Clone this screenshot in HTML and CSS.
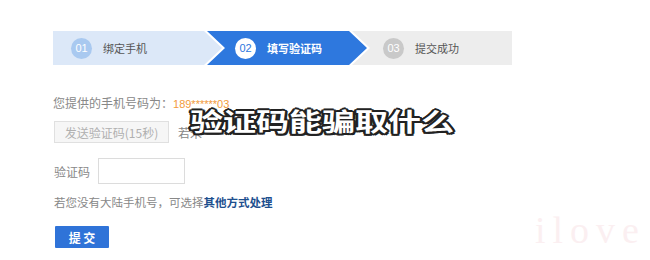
FILE: index.html
```html
<!DOCTYPE html>
<html lang="zh">
<head>
<meta charset="utf-8">
<link rel="stylesheet" href="styles.css">
</head>
<body>
<div class="page">
  <div class="steps">
    <div class="step step-done">
      <span class="num">01</span><span class="label">绑定手机</span>
    </div>
    <div class="step step-active">
      <span class="num">02</span><span class="label">填写验证码</span>
    </div>
    <div class="step step-todo">
      <span class="num">03</span><span class="label">提交成功</span>
    </div>
  </div>

  <div class="form">
    <p class="line phone">您提供的手机号码为：<span class="hl">189******03</span></p>
    <div class="row send-row">
      <button class="btn-send" disabled>发送验证码(15秒)</button>
      <span class="hint">若未</span>
    </div>
    <div class="row code-row">
      <label class="code-label">验证码</label>
      <input class="code-input" type="text">
    </div>
    <p class="line other">若您没有大陆手机号，可选择<a class="link">其他方式处理</a></p>
    <button class="btn-submit">提 交</button>
  </div>

  <div class="caption">验证码能骗取什么</div>
  <div class="watermark">ilove</div>
</div>
</body>
</html>
```

FILE: styles.css
```css
html, body {
  margin: 0;
  padding: 0;
  background: #fff;
}
.page {
  position: relative;
  width: 650px;
  height: 260px;
  overflow: hidden;
  padding: 31px 0 0 53px;
  box-sizing: border-box;
  font-family: "Noto Sans CJK SC", "Liberation Sans", sans-serif;
}
.steps {
  display: flex;
  width: 459px;
  height: 34px;
}
.step {
  display: flex;
  align-items: center;
  height: 34px;
  font-size: 11px;
}
.step + .step {
  margin-left: -15px;
}
.step-done {
  width: 169px;
  padding-left: 18px;
  box-sizing: border-box;
  background: #dce8f8;
  color: #555;
  clip-path: polygon(0 0, calc(100% - 18px) 0, 100% 50%, calc(100% - 18px) 100%, 0 100%);
}
.step-active {
  width: 160px;
  padding-left: 28px;
  box-sizing: border-box;
  background: #2e78de;
  color: #fff;
  clip-path: polygon(0 0, calc(100% - 18px) 0, 100% 50%, calc(100% - 18px) 100%, 0 100%, 18px 50%);
}
.step-todo {
  flex: 1;
  padding-left: 31px;
  box-sizing: border-box;
  background: #ededed;
  color: #555;
  clip-path: polygon(0 0, 100% 0, 100% 100%, 0 100%, 18px 50%);
}
.num {
  width: 21px;
  height: 21px;
  border-radius: 50%;
  display: flex;
  align-items: center;
  justify-content: center;
  font-family: "Liberation Sans", sans-serif;
  font-size: 11px;
  margin-right: 11px;
}
.step-done .num { background: #a9c9f0; color: #fff; }
.step-active .num { background: #fff; color: #2e78de; }
.step-todo .num { background: #c9c9c9; color: #fff; }
.step-active .label { font-weight: bold; }

.form {
  margin-top: 30px;
  color: #888;
  font-size: 12px;
}
.line {
  margin: 0;
  line-height: 16px;
}
.hl {
  color: #f29a3c;
  font-family: "Liberation Sans", sans-serif;
  font-size: 11px;
}
.row {
  display: flex;
  align-items: center;
}
.send-row {
  margin-top: 9px;
}
.btn-send {
  width: 115px;
  height: 22px;
  border: 1px solid #e0e0e0;
  background: #f6f6f6;
  color: #b0b0b0;
  font-family: inherit;
  font-size: 12px;
  padding: 0;
  margin: 0 9px 0 1px;
}
.hint {
  color: #888;
}
.code-row {
  margin-top: 15px;
}
.code-label {
  width: 44px;
  padding-left: 1px;
}
.code-input {
  width: 87px;
  height: 26px;
  box-sizing: border-box;
  border: 1px solid #dcdcdc;
  margin: 0;
  padding: 0;
}
.other {
  margin-top: 10px;
  font-size: 11.5px;
  padding-left: 1px;
}
.link {
  color: #1d4f8e;
  font-weight: bold;
}
.btn-submit {
  display: block;
  margin: 16px 0 0 2px;
  width: 54px;
  height: 22px;
  border: 0;
  border-radius: 1px;
  background: #2f73d8;
  color: #fff;
  font-family: inherit;
  font-weight: bold;
  font-size: 12px;
  padding: 0;
}

.caption {
  position: absolute;
  left: 190px;
  top: 102px;
  font-family: "Noto Sans CJK SC", sans-serif;
  font-weight: bold;
  font-size: 25px;
  line-height: 36px;
  color: #fff;
  transform: scaleX(1.32);
  transform-origin: left center;
  text-shadow:
    -2px 0 0 #222, 2px 0 0 #222, 0 -2px 0 #222, 0 2px 0 #222,
    -1.5px -1.5px 0 #222, 1.5px -1.5px 0 #222, -1.5px 1.5px 0 #222, 1.5px 1.5px 0 #222;
}
.watermark {
  position: absolute;
  left: 535px;
  top: 208px;
  font-family: "Liberation Serif", serif;
  font-size: 38px;
  letter-spacing: 7px;
  color: #fbeff1;
}
```
